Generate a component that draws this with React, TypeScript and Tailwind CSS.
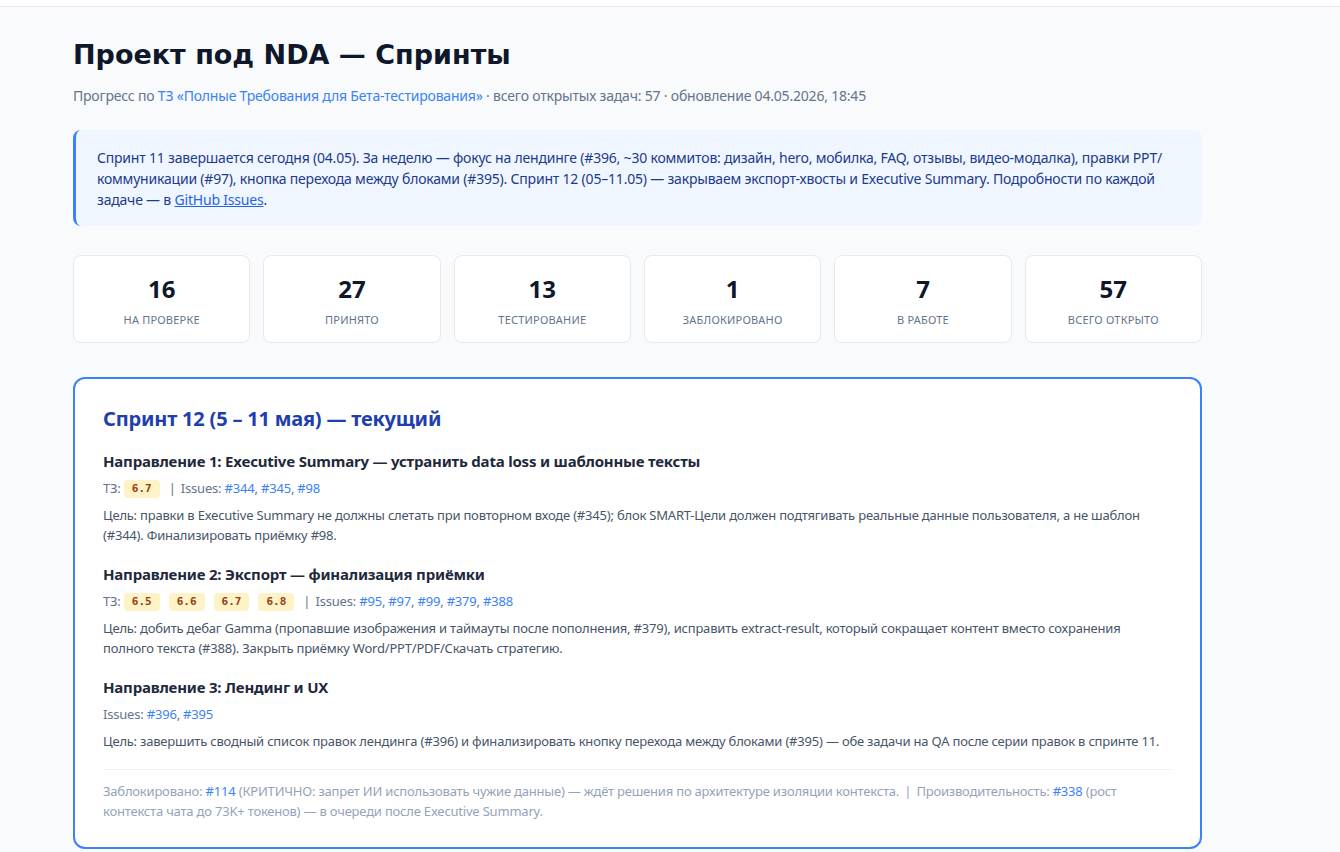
import React from "react";

const stats = [
  { value: "16", label: "На проверке" },
  { value: "27", label: "Принято" },
  { value: "13", label: "Тестирование" },
  { value: "1", label: "Заблокировано" },
  { value: "7", label: "В работе" },
  { value: "57", label: "Всего открыто" },
];

function Tag({ children }: { children: React.ReactNode }) {
  return (
    <span
      className="inline-block rounded-[4px] bg-[#fef3c7] px-[8px] py-[2px] text-[11px] font-bold leading-[14px] tracking-normal text-[#92400e] mr-[9px] align-[1px]"
      style={{ fontFamily: '"DejaVu Sans Mono", monospace' }}
    >
      {children}
    </span>
  );
}

function Issue({ n }: { n: string }) {
  return <a className="text-[#3b82f6]">#{n}</a>;
}

function IssueList({ ids }: { ids: string[] }) {
  return (
    <>
      {ids.map((id, i) => (
        <React.Fragment key={id}>
          <Issue n={id} />
          {i < ids.length - 1 ? ", " : ""}
        </React.Fragment>
      ))}
    </>
  );
}

function Direction({
  title,
  tags,
  issues,
  children,
}: {
  title: string;
  tags?: string[];
  issues: string[];
  children: React.ReactNode;
}) {
  return (
    <div className="mt-[18px] first:mt-0">
      <h3 className="text-[15px] font-bold leading-[22px] text-[#1e293b]">{title}</h3>
      <div className="mt-[5px] text-[13px] leading-[22px] text-[#64748b]">
        {tags ? (
          <>
            ТЗ:{" "}
            {tags.map((t) => (
              <Tag key={t}>{t}</Tag>
            ))}
            <span className="mr-[2px]">|</span> Issues: <IssueList ids={issues} />
          </>
        ) : (
          <>
            Issues: <IssueList ids={issues} />
          </>
        )}
      </div>
      <p className="mt-[6px] text-[13px] leading-[20px] text-[#475569]">{children}</p>
    </div>
  );
}

export default function App() {
  return (
    <div
      className="min-h-screen bg-[#f8fafc] tracking-[-0.2px]"
      style={{ fontFamily: '"Noto Sans", "Open Sans", sans-serif' }}
    >
      <div className="h-[7px] border-b border-[#e5e7eb] bg-white" />
      <div className="ml-[73px] w-[1129px] pb-[10px]">
        <h1
          className="mt-[30px] text-[27px] font-bold leading-[36px] tracking-normal text-[#0f172a]"
          style={{ fontFamily: '"DejaVu Sans", sans-serif' }}
        >
          Проект под NDA — Спринты
        </h1>
        <p className="mt-[13px] text-[14px] leading-[20px] text-[#64748b]">
          Прогресс по{" "}
          <a className="text-[#3b82f6]">ТЗ «Полные Требования для Бета-тестирования»</a> · всего
          открытых задач: 57 · обновление 04.05.2026, 18:45
        </p>

        <div className="mt-[24px] rounded-[8px] border-l-[3px] border-[#3b82f6] bg-[#eff6ff] pl-[21px] pr-[24px] pt-[17px] pb-[16px] text-[14px] leading-[21px] text-[#1e3a8a]">
          Спринт 11 завершается сегодня (04.05). За неделю — фокус на лендинге (#396, ~30 коммитов:
          дизайн, hero, мобилка, FAQ, отзывы, видео-модалка), правки PPT/
          <wbr />
          коммуникации (#97), кнопка перехода между блоками (#395). Спринт 12 (05–11.05) —
          закрываем экспорт-хвосты и Executive Summary. Подробности по каждой задаче — в{" "}
          <a className="text-[#2563eb] underline">GitHub Issues</a>.
        </div>

        <div className="mt-[29px] grid grid-cols-6 gap-[13px]">
          {stats.map((s) => (
            <div
              key={s.label}
              className="flex h-[88px] flex-col items-center justify-center rounded-[8px] border border-[#e5e9f0] bg-white pt-[4px]"
            >
              <div className="text-[24px] font-bold leading-[30px] tracking-normal text-[#0f172a]">
                {s.value}
              </div>
              <div className="mt-[8px] text-[11px] uppercase leading-[16px] tracking-[0.2px] text-[#64748b]">
                {s.label}
              </div>
            </div>
          ))}
        </div>

        <div className="mt-[34px] rounded-[12px] border-2 border-[#3b82f6] bg-white px-[28px] pt-[26px] pb-[26px]">
          <h2 className="text-[20px] font-bold leading-[28px] text-[#1e40af]">
            Спринт 12 (5 – 11 мая) — текущий
          </h2>
          <div className="mt-[17px]">
            <Direction
              title="Направление 1: Executive Summary — устранить data loss и шаблонные тексты"
              tags={["6.7"]}
              issues={["344", "345", "98"]}
            >
              Цель: правки в Executive Summary не должны слетать при повторном входе (#345); блок
              SMART-Цели должен подтягивать реальные данные пользователя, а не шаблон (#344).
              Финализировать приёмку #98.
            </Direction>
            <Direction
              title="Направление 2: Экспорт — финализация приёмки"
              tags={["6.5", "6.6", "6.7", "6.8"]}
              issues={["95", "97", "99", "379", "388"]}
            >
              Цель: добить дебаг Gamma (пропавшие изображения и таймауты после пополнения, #379),
              исправить extract-result, который сокращает контент вместо сохранения полного текста
              (#388). Закрыть приёмку Word/PPT/PDF/Скачать стратегию.
            </Direction>
            <Direction title="Направление 3: Лендинг и UX" issues={["396", "395"]}>
              Цель: завершить сводный список правок лендинга (#396) и финализировать кнопку перехода
              между блоками (#395) — обе задачи на QA после серии правок в спринте 11.
            </Direction>
          </div>
          <div className="mt-[18px] border-t border-[#eef2f6] pt-[11px] text-[13px] leading-[20px] text-[#94a3b8]">
            Заблокировано: <Issue n="114" /> (КРИТИЧНО: запрет ИИ использовать чужие данные) — ждёт
            решения по архитектуре изоляции контекста. <span className="mx-[2px]">|</span>{" "}
            Производительность: <Issue n="338" /> (рост контекста чата до 73K+ токенов) — в очереди
            после Executive Summary.
          </div>
        </div>
      </div>
    </div>
  );
}
